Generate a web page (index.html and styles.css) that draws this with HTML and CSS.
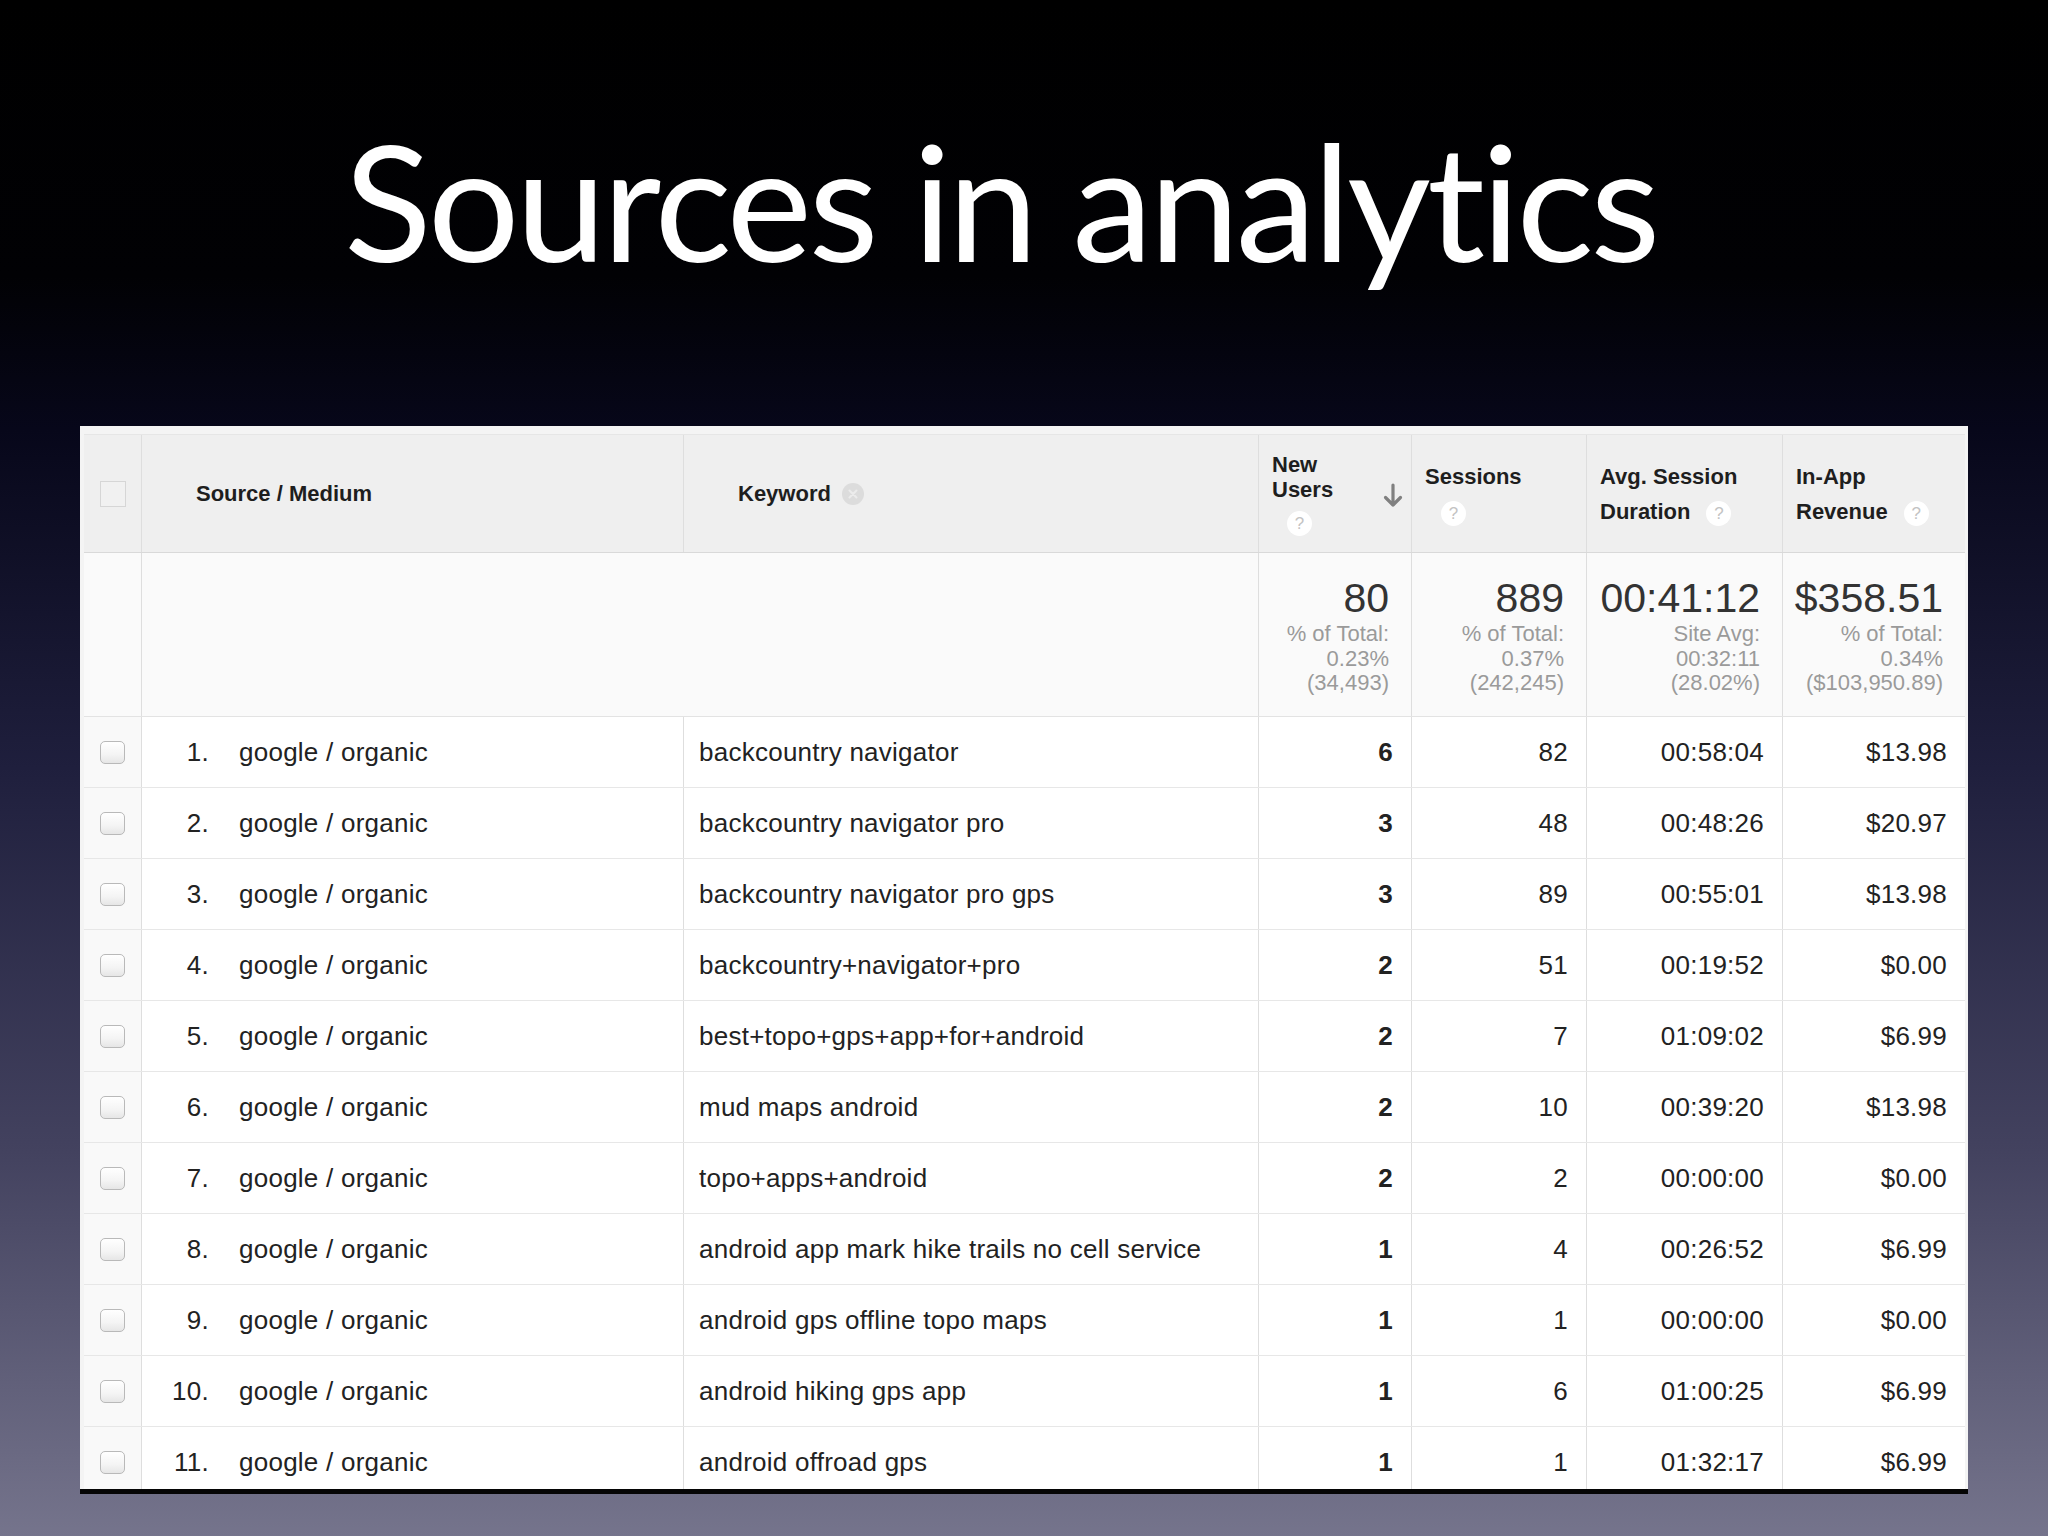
FILE: index.html
```html
<!DOCTYPE html>
<html>
<head>
<meta charset="utf-8">
<title>Sources in analytics</title>
<link rel="stylesheet" href="styles.css">
</head>
<body>
<div class="slide">
  <h1 class="title">Sources in analytics</h1>
  <div class="report">
    <div class="row head">
      <div class="cell chk"><span class="hbox"></span></div>
      <div class="cell hsrc">Source / Medium</div>
      <div class="cell hkw">Keyword
        <svg class="rm" width="22" height="22" viewBox="0 0 22 22"><circle cx="11" cy="11" r="11" fill="#dcdcdc"/><path d="M7.5 7.5 L14.5 14.5 M14.5 7.5 L7.5 14.5" stroke="#ececec" stroke-width="2" stroke-linecap="round"/></svg>
      </div>
      <div class="cell hnu">
        <div class="stack">
          <div>New</div>
          <div>Users</div>
          <div class="qline"><span class="help">?</span></div>
        </div>
        <svg class="sort" width="22" height="26" viewBox="0 0 22 26"><path d="M11 2 V22 M3.5 14.5 L11 22 L18.5 14.5" fill="none" stroke="#808080" stroke-width="3.2" stroke-linecap="round" stroke-linejoin="round"/></svg>
      </div>
      <div class="cell hm"><div class="lines">Sessions<br><span class="help solo">?</span></div></div>
      <div class="cell hm"><div class="lines">Avg. Session<br>Duration<span class="help">?</span></div></div>
      <div class="cell hm"><div class="lines">In-App<br>Revenue<span class="help">?</span></div></div>
    </div>

    <div class="row tot">
      <div class="cell chk"></div>
      <div class="cell span2"></div>
      <div class="cell tnum"><div class="big">80</div><div class="sub">% of Total:</div><div class="sub">0.23%</div><div class="sub">(34,493)</div></div>
      <div class="cell tnum"><div class="big">889</div><div class="sub">% of Total:</div><div class="sub">0.37%</div><div class="sub">(242,245)</div></div>
      <div class="cell tnum"><div class="big">00:41:12</div><div class="sub">Site Avg:</div><div class="sub">00:32:11</div><div class="sub">(28.02%)</div></div>
      <div class="cell tnum"><div class="big">$358.51</div><div class="sub">% of Total:</div><div class="sub">0.34%</div><div class="sub">($103,950.89)</div></div>
    </div>

    <div class="row data">
      <div class="cell chk"><span class="cbox"></span></div>
      <div class="cell src"><span class="idx">1.</span><span>google / organic</span></div>
      <div class="cell kw">backcountry navigator</div>
      <div class="cell num b">6</div><div class="cell num">82</div><div class="cell num">00:58:04</div><div class="cell num">$13.98</div>
    </div>
    <div class="row data">
      <div class="cell chk"><span class="cbox"></span></div>
      <div class="cell src"><span class="idx">2.</span><span>google / organic</span></div>
      <div class="cell kw">backcountry navigator pro</div>
      <div class="cell num b">3</div><div class="cell num">48</div><div class="cell num">00:48:26</div><div class="cell num">$20.97</div>
    </div>
    <div class="row data">
      <div class="cell chk"><span class="cbox"></span></div>
      <div class="cell src"><span class="idx">3.</span><span>google / organic</span></div>
      <div class="cell kw">backcountry navigator pro gps</div>
      <div class="cell num b">3</div><div class="cell num">89</div><div class="cell num">00:55:01</div><div class="cell num">$13.98</div>
    </div>
    <div class="row data">
      <div class="cell chk"><span class="cbox"></span></div>
      <div class="cell src"><span class="idx">4.</span><span>google / organic</span></div>
      <div class="cell kw">backcountry+navigator+pro</div>
      <div class="cell num b">2</div><div class="cell num">51</div><div class="cell num">00:19:52</div><div class="cell num">$0.00</div>
    </div>
    <div class="row data">
      <div class="cell chk"><span class="cbox"></span></div>
      <div class="cell src"><span class="idx">5.</span><span>google / organic</span></div>
      <div class="cell kw">best+topo+gps+app+for+android</div>
      <div class="cell num b">2</div><div class="cell num">7</div><div class="cell num">01:09:02</div><div class="cell num">$6.99</div>
    </div>
    <div class="row data">
      <div class="cell chk"><span class="cbox"></span></div>
      <div class="cell src"><span class="idx">6.</span><span>google / organic</span></div>
      <div class="cell kw">mud maps android</div>
      <div class="cell num b">2</div><div class="cell num">10</div><div class="cell num">00:39:20</div><div class="cell num">$13.98</div>
    </div>
    <div class="row data">
      <div class="cell chk"><span class="cbox"></span></div>
      <div class="cell src"><span class="idx">7.</span><span>google / organic</span></div>
      <div class="cell kw">topo+apps+android</div>
      <div class="cell num b">2</div><div class="cell num">2</div><div class="cell num">00:00:00</div><div class="cell num">$0.00</div>
    </div>
    <div class="row data">
      <div class="cell chk"><span class="cbox"></span></div>
      <div class="cell src"><span class="idx">8.</span><span>google / organic</span></div>
      <div class="cell kw">android app mark hike trails no cell service</div>
      <div class="cell num b">1</div><div class="cell num">4</div><div class="cell num">00:26:52</div><div class="cell num">$6.99</div>
    </div>
    <div class="row data">
      <div class="cell chk"><span class="cbox"></span></div>
      <div class="cell src"><span class="idx">9.</span><span>google / organic</span></div>
      <div class="cell kw">android gps offline topo maps</div>
      <div class="cell num b">1</div><div class="cell num">1</div><div class="cell num">00:00:00</div><div class="cell num">$0.00</div>
    </div>
    <div class="row data">
      <div class="cell chk"><span class="cbox"></span></div>
      <div class="cell src"><span class="idx">10.</span><span>google / organic</span></div>
      <div class="cell kw">android hiking gps app</div>
      <div class="cell num b">1</div><div class="cell num">6</div><div class="cell num">01:00:25</div><div class="cell num">$6.99</div>
    </div>
    <div class="row data">
      <div class="cell chk"><span class="cbox"></span></div>
      <div class="cell src"><span class="idx">11.</span><span>google / organic</span></div>
      <div class="cell kw">android offroad gps</div>
      <div class="cell num b">1</div><div class="cell num">1</div><div class="cell num">01:32:17</div><div class="cell num">$6.99</div>
    </div>
  </div>
</div>
</body>
</html>
```

FILE: styles.css
```css
* { box-sizing: border-box; }
html, body { margin: 0; padding: 0; }
body {
  width: 2048px;
  height: 1536px;
  overflow: hidden;
  font-family: "Liberation Sans", Arial, sans-serif;
  background: linear-gradient(to bottom, #000000 0%, #010104 18%, #07071a 28%, #1f1f3d 50%, #43425f 75%, #75748c 100%);
}
.slide {
  height: 1536px;
  display: flex;
  flex-direction: column;
}
.title {
  margin: 0;
  padding: 103px 0 0 344px;
  font-family: Lato, "Open Sans", sans-serif;
  font-weight: 400;
  font-size: 162px;
  line-height: 194px;
  letter-spacing: -3.7px;
  color: #ffffff;
  white-space: nowrap;
}
.report {
  margin: 129px 0 0 80px;
  width: 1888px;
  height: 1068px;
  padding: 8px 3px 0 4px;
  background: #f4f4f4;
  border-bottom: 5px solid #050505;
  overflow: hidden;
  color: #222;
}
.row {
  display: grid;
  grid-template-columns: 58px 542px 575px 153px 175px 196px 182px;
}
.cell {
  border-right: 1px solid #dedede;
  display: flex;
  align-items: center;
  min-width: 0;
}
.cell:last-child { border-right: 0; }

/* header */
.head {
  height: 119px;
  background: #efefef;
  border-top: 1px solid #e6e6e6;
  border-bottom: 1px solid #d9d9d9;
  font-weight: 700;
  font-size: 22px;
  color: #1e1e1e;
}
.head .cell { padding-top: 1px; }
.chk { justify-content: center; }
.hbox {
  width: 26px;
  height: 26px;
  border: 1px solid #d6d6d6;
  background: #f1f1f1;
}
.hsrc { padding-left: 54px; }
.hkw { padding-left: 54px; }
.rm { margin-left: 11px; }
.hnu {
  padding-left: 13px;
  padding-right: 7px;
  justify-content: space-between;
}
.stack { line-height: 25px; }
.qline { margin-top: 9px; height: 25px; }
.sort { margin-top: 4px; }
.hm { padding-left: 13px; }
.lines { line-height: 35px; }
.help {
  display: inline-flex;
  align-items: center;
  justify-content: center;
  width: 25px;
  height: 25px;
  border-radius: 50%;
  background: #ffffff;
  color: #c3c3c3;
  font-size: 17px;
  font-weight: 400;
  vertical-align: middle;
  margin-left: 16px;
  line-height: 1;
}
.qline .help { margin-left: 15px; vertical-align: top; }

/* totals */
.tot {
  height: 164px;
  background: #fafafa;
  border-bottom: 1px solid #e3e3e3;
}
.span2 { grid-column: span 2; }
.tnum {
  flex-direction: column;
  align-items: flex-end;
  justify-content: flex-start;
  padding: 23px 22px 0 0;
}
.big {
  font-size: 41px;
  line-height: 44px;
  color: #333;
}
.sub {
  font-size: 22px;
  line-height: 24.5px;
  color: #9a9a9a;
}
.big + .sub { margin-top: 2px; }

/* data rows */
.data {
  height: 71px;
  background: #ffffff;
  border-bottom: 1px solid #e7e7e7;
  font-size: 26px;
  letter-spacing: 0.25px;
  color: #222;
}
.data .chk { background: #f9f9f9; }
.cbox {
  width: 25px;
  height: 23px;
  border: 1.5px solid #b9b9b9;
  border-radius: 5px;
  background: linear-gradient(to bottom, #ffffff 0%, #f4f4f4 60%, #e6e6e6 100%);
}
.src { white-space: nowrap; }
.idx {
  display: inline-block;
  width: 67px;
  text-align: right;
  margin-right: 30px;
}
.kw { padding-left: 15px; white-space: nowrap; }
.num {
  justify-content: flex-end;
  padding-right: 18px;
}
.b { font-weight: 700; }
```
